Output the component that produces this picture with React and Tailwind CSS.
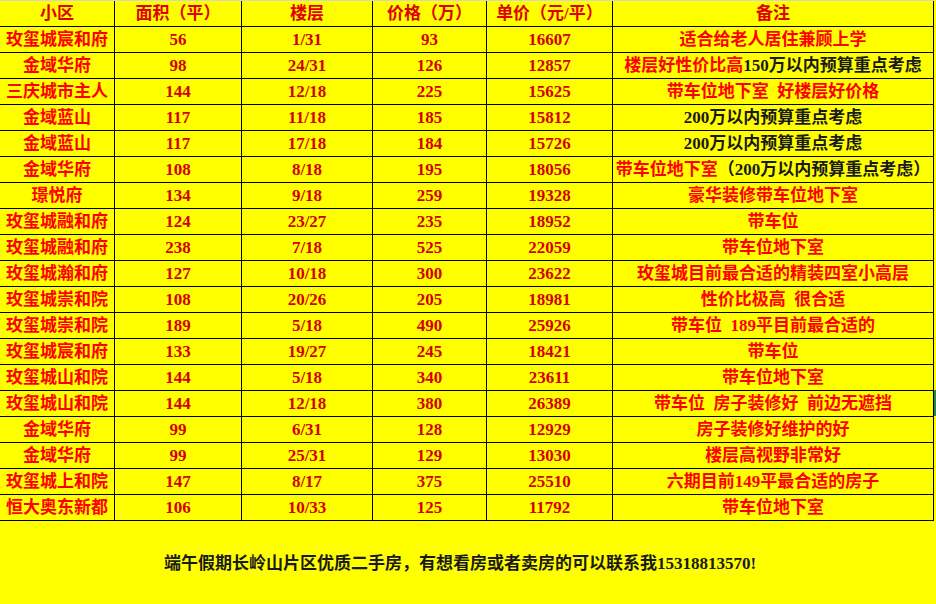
import React from "react";

const rows = [
  ["玫玺城宸和府", "56", "1/31", "93", "16607", [["r", "适合给老人居住兼顾上学"]]],
  ["金域华府", "98", "24/31", "126", "12857", [["r", "楼层好性价比高"], ["k", "150万以内预算重点考虑"]]],
  ["三庆城市主人", "144", "12/18", "225", "15625", [["r", "带车位地下室  好楼层好价格"]]],
  ["金域蓝山", "117", "11/18", "185", "15812", [["k", "200万以内预算重点考虑"]]],
  ["金域蓝山", "117", "17/18", "184", "15726", [["k", "200万以内预算重点考虑"]]],
  ["金域华府", "108", "8/18", "195", "18056", [["r", "带车位地下室"], ["k", "（200万以内预算重点考虑）"]]],
  ["璟悦府", "134", "9/18", "259", "19328", [["r", "豪华装修带车位地下室"]]],
  ["玫玺城融和府", "124", "23/27", "235", "18952", [["r", "带车位"]]],
  ["玫玺城融和府", "238", "7/18", "525", "22059", [["r", "带车位地下室"]]],
  ["玫玺城瀚和府", "127", "10/18", "300", "23622", [["r", "玫玺城目前最合适的精装四室小高层"]]],
  ["玫玺城崇和院", "108", "20/26", "205", "18981", [["r", "性价比极高  很合适"]]],
  ["玫玺城崇和院", "189", "5/18", "490", "25926", [["r", "带车位  189平目前最合适的"]]],
  ["玫玺城宸和府", "133", "19/27", "245", "18421", [["r", "带车位"]]],
  ["玫玺城山和院", "144", "5/18", "340", "23611", [["r", "带车位地下室"]]],
  ["玫玺城山和院", "144", "12/18", "380", "26389", [["r", "带车位  房子装修好  前边无遮挡"]]],
  ["金域华府", "99", "6/31", "128", "12929", [["r", "房子装修好维护的好"]]],
  ["金域华府", "99", "25/31", "129", "13030", [["r", "楼层高视野非常好"]]],
  ["玫玺城上和院", "147", "8/17", "375", "25510", [["r", "六期目前149平最合适的房子"]]],
  ["恒大奥东新都", "106", "10/33", "125", "11792", [["r", "带车位地下室"]]],
];

const headers = ["小区", "面积（平）", "楼层", "价格（万）", "单价（元/平）", "备注"];
const widths = ["w-[115px]", "w-[127px]", "w-[131px]", "w-[114px]", "w-[126px]", "w-[321px]"];

const font = { fontFamily: '"Liberation Serif", "Noto Sans CJK SC", serif' };

function Cell({ i, children, className = "" }) {
  return (
    <div
      className={`${widths[i]} h-[26px] shrink-0 border-b border-black ${i > 0 ? "border-r" : "border-r"} flex items-center justify-center whitespace-pre font-bold text-[17px] leading-none ${className}`}
    >
      {children}
    </div>
  );
}

export default function App() {
  return (
    <div className="relative w-[936px] h-[604px] bg-[#ffff00] overflow-hidden" style={font}>
      <div className="w-[934px] border-t border-[#d4d4d4]">
        <div className="flex">
          {headers.map((h, i) => (
            <Cell key={i} i={i} className="text-[#e00000]">
              {h}
            </Cell>
          ))}
        </div>
        {rows.map((r, ri) => (
          <div key={ri} className="flex">
            <Cell i={0} className="text-[#ff0000]">{r[0]}</Cell>
            <Cell i={1} className="text-[#d40000]">{r[1]}</Cell>
            <Cell i={2} className="text-[#d40000]">{r[2]}</Cell>
            <Cell i={3} className="text-[#d40000]">{r[3]}</Cell>
            <Cell i={4} className="text-[#d40000]">{r[4]}</Cell>
            <Cell i={5}>
              {r[5].map(([c, t], k) => (
                <span key={k} className={c === "r" ? "text-[#ff0000]" : "text-[#1a1a1a]"}>
                  {t}
                </span>
              ))}
            </Cell>
          </div>
        ))}
      </div>
      <div className="flex justify-center pr-[16px] pt-[34px] text-[17px] font-bold text-[#1a1a1a] leading-none whitespace-pre">
        端午假期长岭山片区优质二手房，有想看房或者卖房的可以联系我15318813570!
      </div>
      <div className="absolute left-[934px] top-[390px] w-[2px] h-[26px] bg-[#1f8a4c]" />
    </div>
  );
}
